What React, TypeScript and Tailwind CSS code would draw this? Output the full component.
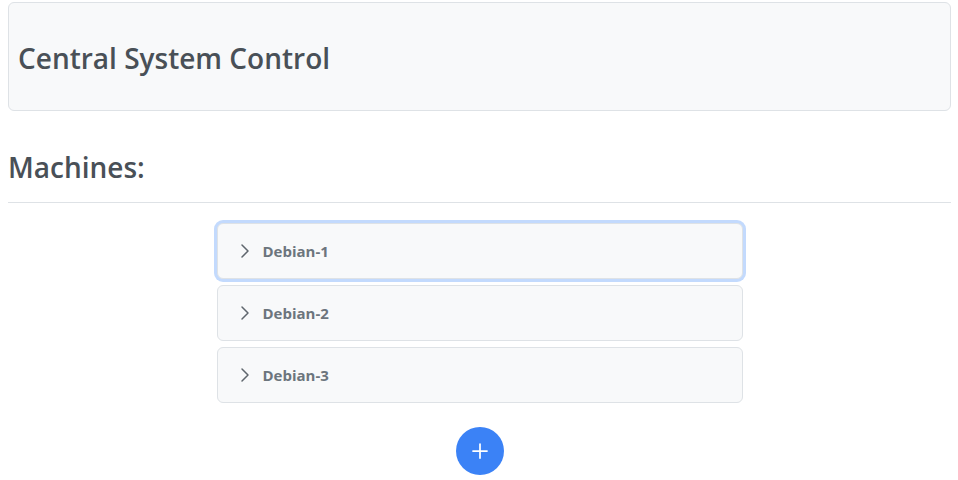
import { Plus } from 'lucide-react';

const machines = ['Debian-1', 'Debian-2', 'Debian-3'];

function Chevron() {
  return (
    <svg width="10" height="16" viewBox="0 0 10 16" fill="none" className="text-[#5f666d]">
      <polyline points="2,2 8,8 2,14" stroke="currentColor" strokeWidth="1.5" strokeLinecap="round" strokeLinejoin="round" />
    </svg>
  );
}

export default function App() {
  return (
    <div className="min-h-screen bg-white pl-2 pr-[7px] pt-0.5 font-['Open_Sans',sans-serif] text-[#495057]">
      <div className="h-[109px] rounded-md border border-[#dee2e6] bg-[#f8f9fa] pl-[9px] pt-[3px] flex items-center">
        <h1 className="text-[28px] font-semibold leading-none">Central System Control</h1>
      </div>

      <h2 className="mt-[38px] text-[28px] font-semibold leading-[36px]">Machines:</h2>
      <hr className="mt-[17px] border-t border-[#dee2e6]" />

      <div className="mx-auto mt-[20px] flex w-[526px] flex-col gap-[6px]">
        {machines.map((name, i) => (
          <button
            key={name}
            className={
              'flex h-[56px] items-center gap-[13px] rounded-md border border-[#dee2e6] bg-[#f8f9fa] pl-[22px] text-left ' +
              (i === 0 ? 'ring-[3px] ring-[#c3dafd]' : '')
            }
          >
            <Chevron />
            <span className="text-[15px] font-bold text-[#6c757d]">{name}</span>
          </button>
        ))}
      </div>

      <div className="mt-[24px] flex justify-center">
        <button className="flex h-12 w-12 items-center justify-center rounded-full bg-[#3b82f6] text-white">
          <Plus className="h-6 w-6" strokeWidth={1.75} />
        </button>
      </div>
    </div>
  );
}
